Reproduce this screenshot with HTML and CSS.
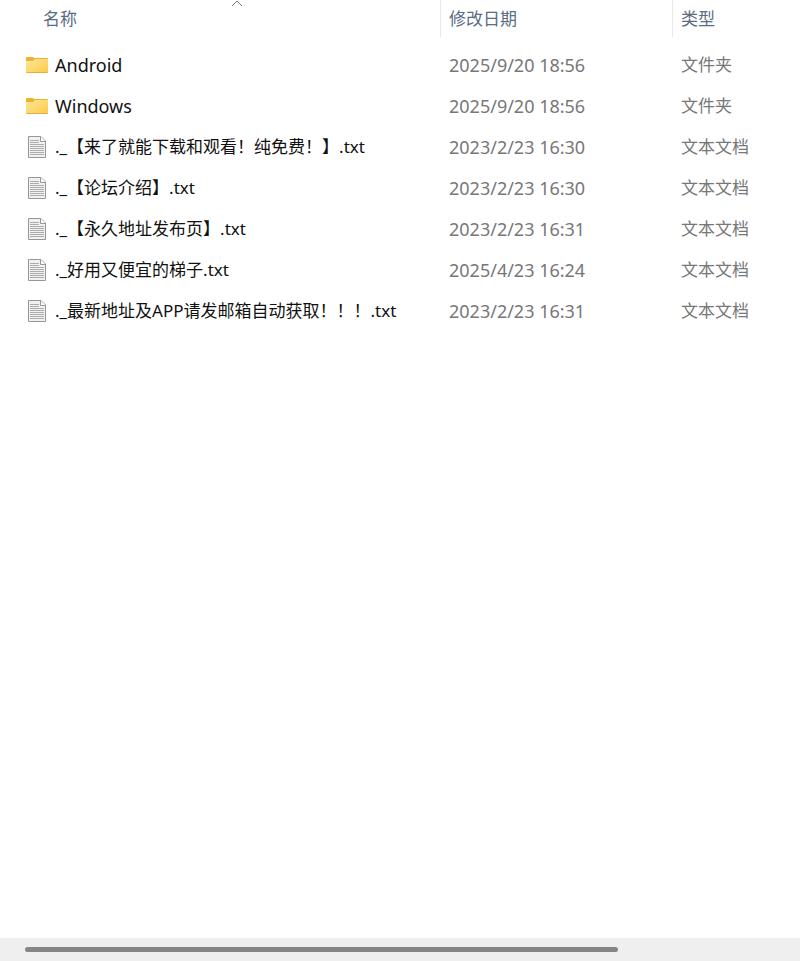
FILE: index.html
```html
<!DOCTYPE html>
<html lang="zh-CN">

<head>
    <meta charset="UTF-8">
    <meta name="viewport" content="width=device-width, initial-scale=1.0">
    <title>文件</title>
    <link rel="stylesheet" href="styles.css">
</head>

<body>
    <svg class="defs" aria-hidden="true">
        <defs>
            <linearGradient id="folder-fill" x1="0" y1="0" x2="1" y2="1">
                <stop offset="0" stop-color="#ffe69c" />
                <stop offset="1" stop-color="#fccb45" />
            </linearGradient>
        </defs>
        <symbol id="folder" viewBox="0 0 22 18">
            <path d="M0 2Q0 1 1 1H6.500L8.500 2H21Q22 2 22 3V9H0Z" fill="#ecb32e" />
            <path d="M0 5H7L9 3H22V16Q22 17 21 17H1Q0 17 0 16Z" fill="url(#folder-fill)" />
            <path d="M0.500 16.500H21.500" stroke="#e3ae3c" />
        </symbol>
        <symbol id="text" viewBox="0 0 18 22">
            <path d="M0.500 0.500H13L17.500 5V21.500H0.500Z" fill="#f1f1f1" stroke="#969696" />
            <path d="M12.500 0.500V5.500H17.500" fill="#fff" stroke="#969696" />
            <path d="M2 4.500H11M2 6.500H11M2 8.500H16M2 10.500H16M2 12.500H16M2 14.500H16M2 16.500H16M2 18.500H16" stroke="#acacac" />
        </symbol>
    </svg>
    <main class="list">
        <table class="files">
            <thead>
                <tr>
                    <th class="col-name" aria-sort="ascending">
                        <button type="button">名称</button>
                        <svg class="sort" viewBox="0 0 12 7" aria-hidden="true"><path d="M1 6L6 1L11 6" /></svg>
                    </th>
                    <th class="col-date"><button type="button">修改日期</button></th>
                    <th class="col-type"><button type="button">类型</button></th>
                </tr>
            </thead>
            <tbody>
                <tr>
                    <td><a href="#" class="name folder"><svg class="icon"><use href="#folder" /></svg>Android</a></td>
                    <td class="date">2025/9/20 18:56</td>
                    <td>文件夹</td>
                </tr>
                <tr>
                    <td><a href="#" class="name folder"><svg class="icon"><use href="#folder" /></svg>Windows</a></td>
                    <td class="date">2025/9/20 18:56</td>
                    <td>文件夹</td>
                </tr>
                <tr>
                    <td><a href="#" class="name"><svg class="icon"><use href="#text" /></svg>._【来了就能下载和观看！纯免费！】.txt</a></td>
                    <td class="date">2023/2/23 16:30</td>
                    <td>文本文档</td>
                </tr>
                <tr>
                    <td><a href="#" class="name"><svg class="icon"><use href="#text" /></svg>._【论坛介绍】.txt</a></td>
                    <td class="date">2023/2/23 16:30</td>
                    <td>文本文档</td>
                </tr>
                <tr>
                    <td><a href="#" class="name"><svg class="icon"><use href="#text" /></svg>._【永久地址发布页】.txt</a></td>
                    <td class="date">2023/2/23 16:31</td>
                    <td>文本文档</td>
                </tr>
                <tr>
                    <td><a href="#" class="name"><svg class="icon"><use href="#text" /></svg>._好用又便宜的梯子.txt</a></td>
                    <td class="date">2025/4/23 16:24</td>
                    <td>文本文档</td>
                </tr>
                <tr>
                    <td><a href="#" class="name"><svg class="icon"><use href="#text" /></svg>._最新地址及APP请发邮箱自动获取！！！.txt</a></td>
                    <td class="date">2023/2/23 16:31</td>
                    <td>文本文档</td>
                </tr>
            </tbody>
        </table>
    </main>
    <div class="scrollbar">
        <div class="thumb"></div>
    </div>
</body>

</html>
```

FILE: styles.css
```css
* {
    box-sizing: border-box;
}

body {
    margin: 0;
    min-height: 100vh;
    display: flex;
    flex-direction: column;
    background: #fff;
    color: #777;
    font-family: "Noto Sans", "Noto Sans CJK SC", sans-serif;
    font-size: 17px;
    line-height: 24px;
    text-spacing-trim: space-all;
}

.defs {
    position: absolute;
    width: 0;
    height: 0;
}

.list {
    flex: 1;
}

.files {
    width: 100%;
    table-layout: fixed;
    border-collapse: collapse;
}

.col-name {
    width: 55%;
    position: relative;
}

.col-date {
    width: 29%;
}

/* header */
th {
    padding: 0 0 7px;
    text-align: left;
    vertical-align: top;
}

th button {
    display: block;
    width: 100%;
    height: 37px;
    padding: 0 8px;
    border: 0;
    border-left: 1px solid #e8e8ea;
    background: none;
    color: #5b6c84;
    font: inherit;
    font-weight: 400;
    text-align: left;
    cursor: pointer;
}

.col-name button {
    padding-left: 43px;
    border-left: 0;
}

.sort {
    position: absolute;
    top: 0;
    left: 231px;
    width: 12px;
    height: 7px;
    fill: none;
    stroke: #777;
}

/* rows */
td {
    height: 41px;
    padding: 0 0 0 9px;
    white-space: nowrap;
}

td:first-child {
    padding-left: 26px;
}

.name {
    display: flex;
    align-items: center;
    gap: 7px;
    color: #111;
    text-decoration: none;
}

.folder,
.date {
    font-size: 18px;
}

.icon {
    width: 22px;
    height: 22px;
}

/* horizontal scrollbar */
.scrollbar {
    height: 23px;
    padding: 9px 25px;
    background: #efefef;
}

.thumb {
    width: 79%;
    height: 5px;
    border-radius: 3px;
    background: #868686;
}
```
